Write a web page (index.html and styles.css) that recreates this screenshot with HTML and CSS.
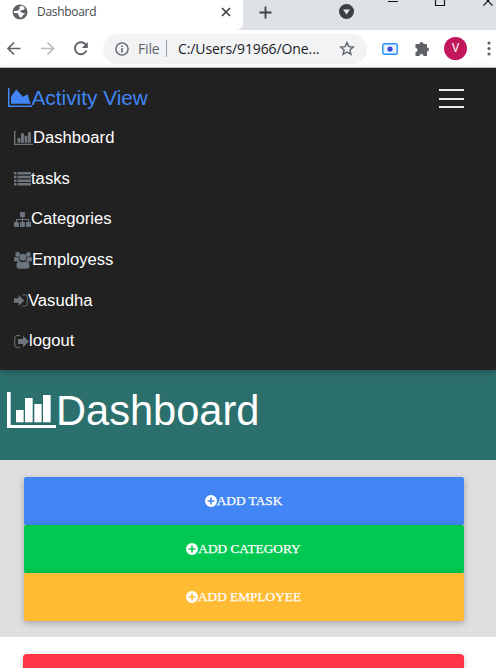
FILE: index.html
```html
<!DOCTYPE html>
<html lang="en">
<head>
<meta charset="utf-8">
<title>Dashboard</title>
<link rel="stylesheet" href="styles.css">
</head>
<body>
<svg class="defs" width="0" height="0">
  <symbol id="bars" viewBox="0 0 147 108" preserveAspectRatio="none"><path d="M0 0h11v99h136v9H0zM27 54h23v37H27zM54 18h23v73H54zM82 36h22v55H82zM108 9h23v82h-23z"/></symbol>
  <symbol id="plus" viewBox="0 0 12 12"><path fill-rule="evenodd" d="M6 0a6 6 0 1 0 0 12A6 6 0 0 0 6 0zM5.2 2.6h1.6v2.6h2.6v1.6H6.8v2.6H5.2V6.8H2.6V5.2h2.6z"/></symbol>
</svg>
<header class="browser">
  <div class="strip">
    <div class="tab">
      <svg class="globe" width="16" height="16" viewBox="0 0 16 16"><circle cx="8" cy="8" r="7.5" fill="#5f6368"/><path d="M10 1.800C8.800 2.200 7.400 2.500 7.300 3.600c-.1 1 .8 1.200-.2 2.100-1 .8-2 1.200-3.600 1.200H1.900c-.2 1-.1 1.600.1 2.200 1.600-.3 3.600-.2 4.200.7.500.9-.2 1.600.8 1.900.6.2.2 1.200.8 1.700.8.200 1.800-.1 2.600-.7-.2-.9.400-1.300 1-1.800.7-.6 1.600-.7 1.900-1.600-1.200.2-2 .1-2.700-.5-.7-.8-2.300-.2-2.200-1.300.1-1.100 1.100-1.200 2.200-1.400 1.100-.2 1.800-.7 2.100-1.600C12.600 3.300 11.500 2.200 10 1.800z" fill="#fff"/></svg>
      <span class="tab-title">Dashboard</span>
      <svg class="tab-close" width="10" height="10" viewBox="0 0 10 10"><path d="M1 1l8 8M9 1L1 9" stroke="#3c4043" stroke-width="1.700"/></svg>
    </div>
    <svg class="new-tab" width="13" height="13" viewBox="0 0 13 13"><path d="M6.500 .5v12M.5 6.500h12" stroke="#3c4043" stroke-width="1.800"/></svg>
    <svg class="search-tabs" width="15" height="15" viewBox="0 0 15 15"><circle cx="7.500" cy="7.500" r="7.500" fill="#3c4043"/><path d="M4 5.500h7L7.500 10.500z" fill="#dee1e6"/></svg>
    <svg class="window-controls" width="110" height="8" viewBox="386 0 110 8"><path d="M388 1.500h10M435.500-3v8.500h9V-3M483.500 5.500L493-4M492.500 5.500L483-4" fill="none" stroke="#111" stroke-width="1.100"/></svg>
  </div>
  <div class="toolbar">
    <svg class="nav-arrows" width="96" height="38" viewBox="0 30 96 38" fill="none" stroke-width="1.700"><path d="M20.500 48.500H8.500M14 42.500l-6 6 6 6" stroke="#5f6368"/><path d="M41 48.500h12.500M47.500 42.500l6 6-6 6" stroke="#babcbe"/><path d="M86 45a6 6 0 1 0 .5 5.500" stroke="#5f6368" stroke-width="1.900"/><path d="M87.800 42v6h-6z" fill="#5f6368"/></svg>
    <div class="address">
      <svg class="info" width="14" height="14" viewBox="0 0 14 14"><circle cx="7" cy="7" r="6.100" fill="none" stroke="#5f6368" stroke-width="1.400"/><path d="M7 6v4.500M7 3.500V5" stroke="#5f6368" stroke-width="1.500"/></svg>
      <span class="scheme">File</span><i class="divider"></i><span class="url">C:/Users/91966/One...</span>
      <svg class="star" width="16" height="15" viewBox="0 0 16 15"><path d="M8 1.600l1.800 4 4.500.4-3.400 2.900 1 4.400L8 11l-3.900 2.300 1-4.400L1.700 6l4.500-.4z" fill="none" stroke="#5f6368" stroke-width="1.400"/></svg>
    </div>
    <svg class="camera" width="16" height="12" viewBox="0 0 16 12"><rect x=".8" y=".8" width="14.400" height="10.400" rx="1.500" fill="#e6f3ff" stroke="#2491fc" stroke-width="1.400"/><circle cx="8" cy="6" r="2.600" fill="#3949d1"/></svg>
    <svg class="puzzle" width="15" height="15" viewBox="0 0 15 15"><path d="M1.500 3H4.500a2 2 0 0 1 4 0H12v3.500a2 2 0 0 1 0 4V15H8.500a2 2 0 0 0-4 0H.5v-4a2 2 0 0 0 0-4V3z" fill="#5f6368"/></svg>
    <span class="avatar">V</span>
    <svg class="kebab" width="4" height="15" viewBox="0 0 4 15" fill="#5f6368"><circle cx="2" cy="2" r="1.600"/><circle cx="2" cy="7.500" r="1.600"/><circle cx="2" cy="13" r="1.600"/></svg>
  </div>
</header>
<nav class="navbar">
  <div class="brand-row">
    <a class="brand"><svg width="24" height="19" viewBox="0 0 2048 1536" preserveAspectRatio="none"><path d="M2048 1408v128H0V0h128v1408zM1664 512l256 768H256V704l448-576 576 576z"/></svg><span>Activity View</span></a>
    <span class="toggler"><i></i><i></i><i></i></span>
  </div>
  <ul class="menu">
    <li><svg width="19" height="14"><use href="#bars"/></svg><span>Dashboard</span></li>
    <li><svg width="17" height="14" viewBox="0 0 17 14"><path d="M0 0h2.500v2.500H0zM3.500 0H17v2.500H3.500zM0 3.700h2.500v2.500H0zM3.500 3.700H17v2.500H3.500zM0 7.400h2.500v2.500H0zM3.500 7.400H17v2.500H3.500zM0 11.100h2.500v2.500H0zM3.500 11.100H17v2.500H3.500z"/></svg><span>tasks</span></li>
    <li><svg width="17" height="15" viewBox="0 0 17 15"><rect x="6" width="5" height="5" rx=".8"/><rect y="10" width="5" height="5" rx=".8"/><rect x="6" y="10" width="5" height="5" rx=".8"/><rect x="12" y="10" width="5" height="5" rx=".8"/><path d="M8 4h1v3h6v4h-1V8H9v3H8V8H3v3H2V7h6z"/></svg><span>Categories</span></li>
    <li><svg width="18" height="17" viewBox="0 0 18 17"><circle cx="3.700" cy="2.500" r="2.400"/><circle cx="14.300" cy="2.500" r="2.400"/><circle cx="9" cy="5.200" r="3.500"/><path d="M1.300 4.800c1.200.8 2.400.8 3.500.4 0 1.500.5 2.500 1.200 3.200-1 0-1.700.4-2.400 1H1.500C.6 9.400 0 8.900 0 8c0-1.600.3-3.200 1.300-3.200zM16.700 4.800c-1.200.8-2.400.8-3.500.4 0 1.500-.5 2.500-1.200 3.200 1 0 1.700.4 2.400 1h2.100c.9 0 1.500-.5 1.500-1.400 0-1.600-.3-3.200-1.300-3.200zM5.500 9c2 1.700 5 1.700 7 0 2.200 0 3 2.500 3 5 0 1.700-.9 2.700-2.500 2.700H5C3.400 16.700 2.500 15.700 2.500 14c0-2.500.8-5 3-5z"/></svg><span>Employess</span></li>
    <li><svg width="14" height="13" viewBox="0 0 15 13"><path d="M0 4h5V.7l6 5.800-6 5.800V9H0z"/><path d="M9 .6h3A2.300 2.300 0 0 1 14.200 3v7a2.300 2.300 0 0 1-2.200 2.400H9" fill="none" stroke="#6c757d"/></svg><span>Vasudha</span></li>
    <li><svg width="15" height="13" viewBox="0 0 15 13"><path d="M4 4h5V.7l6 5.800-6 5.800V9H4z"/><path d="M6 .6H3A2.300 2.300 0 0 0 .7 3v7A2.300 2.300 0 0 0 3 12.400h3" fill="none" stroke="#6c757d"/></svg><span>logout</span></li>
  </ul>
</nav>
<section class="hero"><svg width="49" height="36"><use href="#bars"/></svg><h1>Dashboard</h1></section>
<section class="actions">
  <button class="btn primary"><svg width="12" height="12"><use href="#plus"/></svg><span>ADD TASK</span></button>
  <button class="btn success"><svg width="12" height="12"><use href="#plus"/></svg><span>ADD CATEGORY</span></button>
  <button class="btn warning"><svg width="12" height="12"><use href="#plus"/></svg><span>ADD EMPLOYEE</span></button>
</section>
<main class="cards"><div class="card danger"></div></main>
</body>
</html>
```
FILE: styles.css
```css
* { box-sizing: border-box; }
body { margin: 0; height: 668px; overflow: hidden; background: #fff; font-family: "Liberation Sans", Arial, sans-serif; }
svg { display: block; flex: none; }
span { white-space: nowrap; }
.defs { position: absolute; }

.browser { height: 68px; border-bottom: 1px solid #c9cacc; font-family: "Open Sans", "Noto Sans", sans-serif; }
.strip { display: flex; height: 30px; background: #dee1e6; }
.tab { display: flex; width: 243px; padding-left: 12px; background: #fff; border-radius: 0 0 7px 0; }
.globe { margin-top: 4px; }
.tab-title { width: 183px; margin-left: 9px; color: #45494d; font-size: 12px; line-height: 24px; letter-spacing: -.3px; }
.tab-close { margin: 7px 0 0 1px; }
.new-tab { margin: 6px 0 0 16px; }
.search-tabs { margin: 4px 0 0 67px; }
.window-controls { margin-left: 32px; }
.toolbar { display: flex; height: 37px; align-items: center; }
.nav-arrows { width: 96px; }
.address { display: flex; align-items: center; width: 264px; height: 30px; margin-left: 7px; padding-left: 12px; border-radius: 15px; background: #f1f3f4; font-size: 14px; color: #202124; }
.scheme { width: 28px; margin-left: 9px; color: #5f6368; letter-spacing: -.15px; }
.divider { width: 1px; height: 17px; background: #9aa0a6; }
.url { width: 150px; margin-left: 11px; letter-spacing: -.1px; }
.star { margin-left: 11px; }
.camera { margin-left: 15px; }
.puzzle { margin-left: 17px; }
.avatar { width: 23px; height: 23px; margin-left: 14px; border-radius: 50%; background: #c2185b; color: #fff; font: 12px/23px Roboto, sans-serif; text-align: center; }
.kebab { margin-left: 20px; }

.navbar { position: relative; height: 302px; background: #212121; box-shadow: 0 2px 5px rgba(0,0,0,.16), 0 2px 10px rgba(0,0,0,.12); }
.brand-row { display: flex; height: 50px; justify-content: space-between; padding: 20px 32px 0 7.500px; }
.brand { display: flex; height: 20px; color: #4285f4; fill: #4285f4; font-size: 20.800px; line-height: 20px; }
.toggler { display: grid; width: 25px; height: 19px; margin-top: 1px; align-content: space-between; }
.toggler i { height: 2px; background: #e9ebec; }
.menu { margin: 0; padding: 0 0 0 14px; list-style: none; color: #fff; fill: #6c757d; font-size: 16.650px; }
.menu li { display: flex; align-items: center; height: 40.600px; }

.hero { display: flex; height: 90px; padding: 22px 0 0 7px; background: #2c706e; color: #fff; fill: #fff; }
h1 { margin: -3px 0 0; font-size: 41.600px; font-weight: 400; line-height: 44px; }

.actions { height: 177px; padding: 17px 32px 0 24px; background: #dfdfdf; }
.btn { display: flex; width: 100%; height: 48px; align-items: center; justify-content: center; padding: 0 1px 0 0; border: 0; border-radius: 2px; color: #fff; fill: #fff; font: 13.300px "Liberation Serif", "Times New Roman", serif; -webkit-text-stroke: .25px #fff; box-shadow: 0 2px 5px rgba(0,0,0,.16), 0 2px 10px rgba(0,0,0,.12); }
.primary { background: #4285f4; }
.success { background: #00c851; }
.warning { background: #ffbb33; }
.cards { height: 31px; padding: 17px 32px 0 23px; }
.card { height: 14px; border-radius: 4px 4px 0 0; box-shadow: 0 2px 5px rgba(0,0,0,.16), 0 2px 10px rgba(0,0,0,.12); }
.danger { background: #ff3547; }
```
